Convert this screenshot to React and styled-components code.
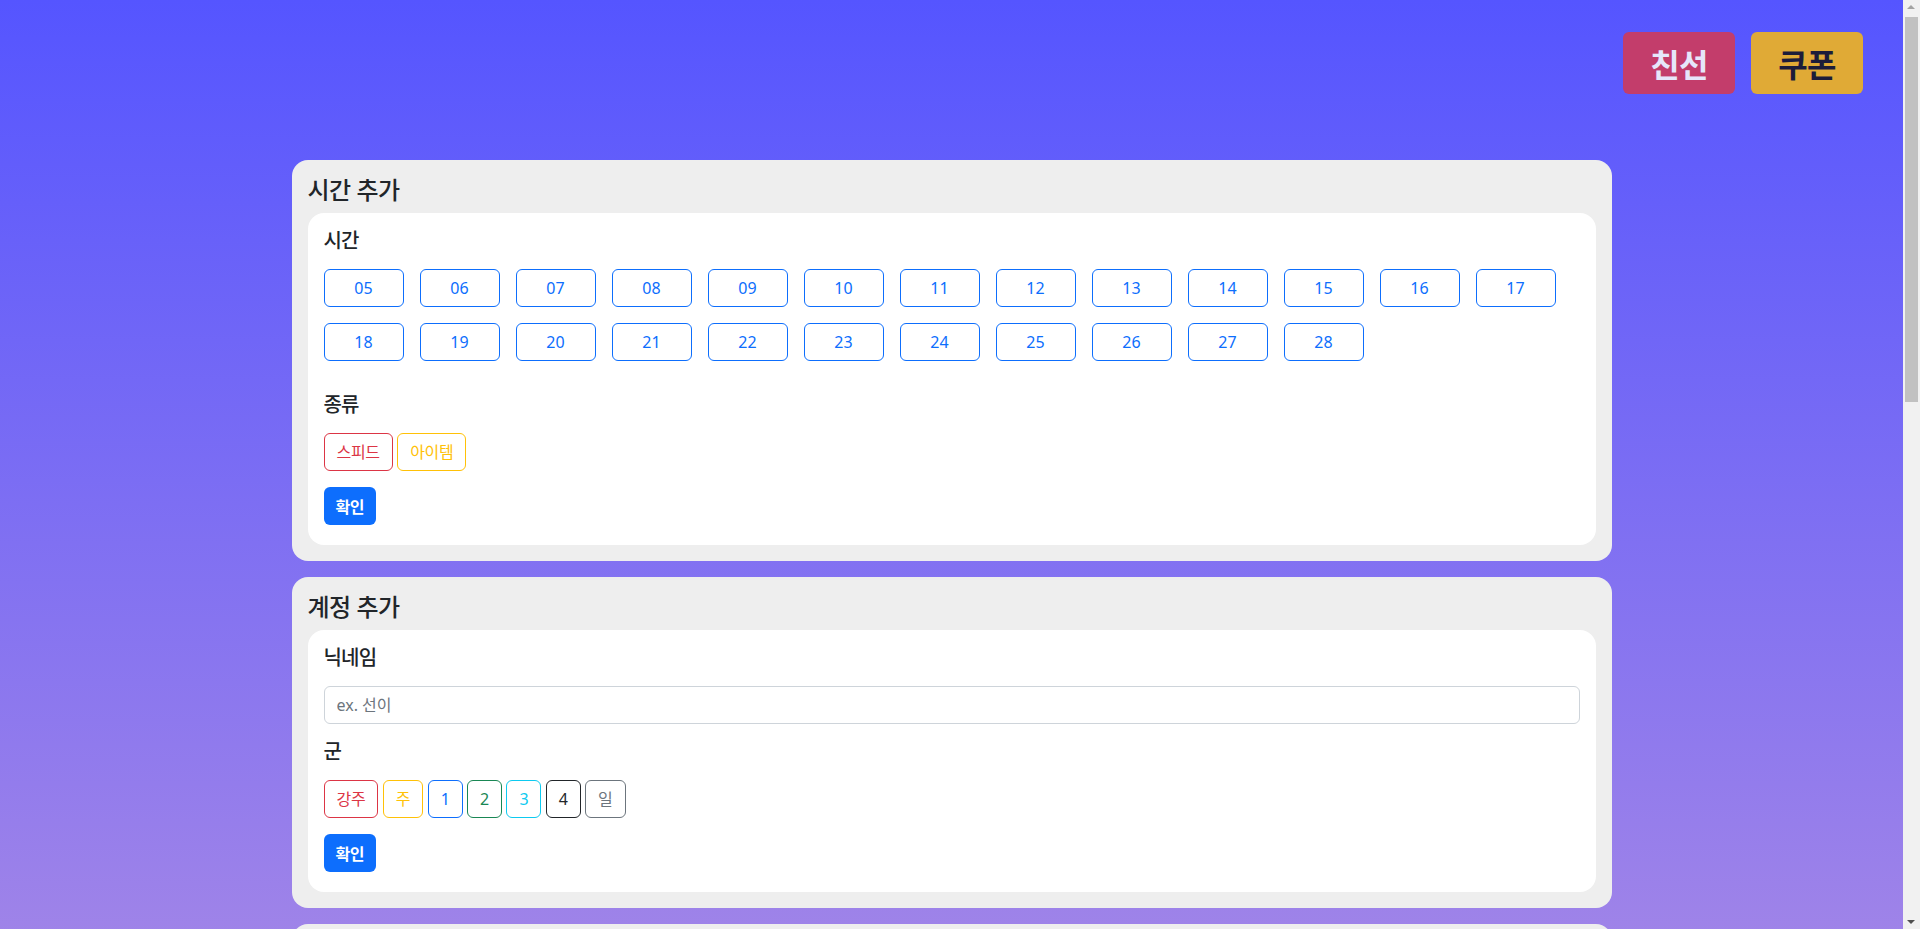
import { createGlobalStyle, styled } from "styled-components";

const GlobalStyle = createGlobalStyle`
    * {
        box-sizing: border-box;
    }

    body {
        margin: 0;
        background-color: #f1f1f1;
        font-family: "Noto Sans", "Noto Sans CJK KR", sans-serif;
        color: #212529;
    }
`

const Page = styled.div`
    min-height: 100vh;
    margin-right: 17px;
    padding-bottom: 40px;
    background: linear-gradient(180deg, #5555ff 0%, #ffc0cb 100%);
`

const ScrollTrack = styled.div`
    position: fixed;
    top: 0;
    right: 0;
    width: 17px;
    height: 100vh;
    background-color: #f1f1f1;
`

const ScrollThumb = styled.div`
    position: absolute;
    top: 17px;
    left: 2px;
    right: 2px;
    height: 385px;
    background-color: #c1c1c1;
`

const ScrollArrow = styled.span`
    position: absolute;
    left: 4px;
    width: 0;
    height: 0;
    border-left: 4px solid transparent;
    border-right: 4px solid transparent;
    ${props => (props.$down
        ? "bottom: 5px; border-top: 4px solid #505050;"
        : "top: 5px; border-bottom: 4px solid #a3a3a3;")}
`

const Header = styled.header`
    display: flex;
    justify-content: flex-end;
    gap: 16px;
    height: 160px;
    padding: 32px 40px 0;
`

const NavButton = styled.button`
    width: 112px;
    height: 62px;
    border: none;
    border-radius: 6px;
    padding: 0;
    cursor: pointer;
    font-family: inherit;
    font-size: 32px;
    font-weight: 700;
    letter-spacing: -0.02em;
    background-color: ${props => props.$bg};
    color: ${props => props.$fg};
`

const Container = styled.main`
    width: 1320px;
    margin: 0 auto;
    display: flex;
    flex-direction: column;
    gap: 16px;
`

const Section = styled.section`
    background-color: #eeeeee;
    border-radius: 16px;
    padding: 16px;
`

const SectionTitle = styled.h4`
    margin: 0 0 8px;
    font-size: 24px;
    font-weight: 500;
    line-height: 1.2;
    letter-spacing: -0.02em;
`

const Panel = styled.div`
    background-color: #ffffff;
    border-radius: 16px;
    padding: 16px 16px 20px;
`

const Label = styled.h5`
    margin: 0 0 16px;
    font-size: 20px;
    font-weight: 500;
    line-height: 1.2;
    letter-spacing: -0.04em;
`

const TimeGrid = styled.div`
    display: flex;
    flex-wrap: wrap;
    gap: 16px;
    margin-bottom: 32px;
`

const ChipRow = styled.div`
    display: flex;
    gap: 4.5px;
    margin-bottom: 16px;
`

const OutlineButton = styled.button`
    height: 38px;
    width: ${props => (props.$wide ? "80px" : "auto")};
    padding: 0 12px;
    border: 1px solid ${props => props.$color};
    border-radius: 6px;
    background-color: #ffffff;
    color: ${props => props.$color};
    cursor: pointer;
    font-family: inherit;
    font-size: 16px;
    line-height: 1.5;
    letter-spacing: ${props => (props.$wide ? "0" : "-0.02em")};
`

const SubmitButton = styled.button`
    height: 38px;
    padding: 0 12px;
    border: none;
    border-radius: 6px;
    background-color: #0d6efd;
    color: #ffffff;
    cursor: pointer;
    font-family: inherit;
    font-size: 16px;
    font-weight: 700;
    letter-spacing: -0.03em;
`

const TextInput = styled.input`
    display: block;
    width: 100%;
    height: 38px;
    margin-bottom: 16px;
    padding: 6px 12px;
    border: 1px solid #ced4da;
    border-radius: 6px;
    font-family: inherit;
    font-size: 16px;
    color: #212529;

    &::placeholder {
        color: #6c757d;
    }
`

const ScheduleRow = styled.div`
    height: 45px;
    border-bottom: 1px solid #eeeeee;
`

const hours = Array.from({ length: 24 }, (_, i) => String(i + 5).padStart(2, "0"))

const kinds = [
    { label: "스피드", color: "#dc3545" },
    { label: "아이템", color: "#ffc107" },
]

const groups = [
    { label: "강주", color: "#dc3545" },
    { label: "주", color: "#ffc107" },
    { label: "1", color: "#0d6efd" },
    { label: "2", color: "#198754" },
    { label: "3", color: "#0dcaf0" },
    { label: "4", color: "#212529" },
    { label: "일", color: "#6c757d" },
]

const App = () => {
    return (
        <Page>
            <GlobalStyle />
            <Header>
                <NavButton $bg="#c33d6b" $fg="#e6e6fa">친선</NavButton>
                <NavButton $bg="#e0aa36" $fg="#1c1c3a">쿠폰</NavButton>
            </Header>
            <Container>
                <Section>
                    <SectionTitle>시간 추가</SectionTitle>
                    <Panel>
                        <Label>시간</Label>
                        <TimeGrid>
                            {hours.map(h => (
                                <OutlineButton key={h} $wide $color="#0d6efd">{h}</OutlineButton>
                            ))}
                        </TimeGrid>
                        <Label>종류</Label>
                        <ChipRow>
                            {kinds.map(k => (
                                <OutlineButton key={k.label} $color={k.color}>{k.label}</OutlineButton>
                            ))}
                        </ChipRow>
                        <SubmitButton>확인</SubmitButton>
                    </Panel>
                </Section>

                <Section>
                    <SectionTitle>계정 추가</SectionTitle>
                    <Panel>
                        <Label>닉네임</Label>
                        <TextInput placeholder="ex. 선이" />
                        <Label>군</Label>
                        <ChipRow>
                            {groups.map(g => (
                                <OutlineButton key={g.label} $color={g.color}>{g.label}</OutlineButton>
                            ))}
                        </ChipRow>
                        <SubmitButton>확인</SubmitButton>
                    </Panel>
                </Section>

                <Section>
                    <SectionTitle>시간표</SectionTitle>
                    <Panel>
                        {hours.map(h => (
                            <ScheduleRow key={h} />
                        ))}
                    </Panel>
                </Section>
            </Container>
            <ScrollTrack>
                <ScrollArrow />
                <ScrollThumb />
                <ScrollArrow $down />
            </ScrollTrack>
        </Page>
    )
}

export default App;
